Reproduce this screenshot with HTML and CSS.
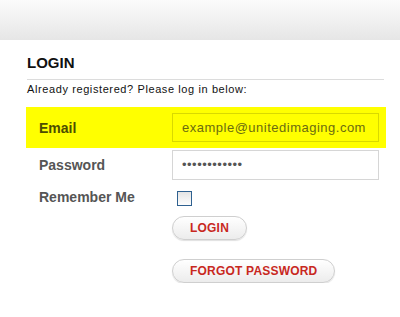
FILE: index.html
```html
<!DOCTYPE html>
<html lang="en">
	<head>
		<meta charset="UTF-8" />
		<title>Login</title>
		<link rel="stylesheet" href="styles.css">
	</head>
	<body>
		<div class="header"></div>
		<div class="content">
			<h2 class="title">LOGIN</h2>
			<p class="intro">Already registered? Please log in below:</p>
			<form class="login-form">
				<div class="row highlight">
					<label for="email">Email</label>
					<input type="text" id="email" value="example@unitedimaging.com" />
				</div>
				<div class="row">
					<label for="password">Password</label>
					<input type="password" id="password" value="examplepassw" />
				</div>
				<div class="row check-row">
					<label for="remember">Remember Me</label>
					<span class="checkbox"></span>
				</div>
				<div class="buttons">
					<button type="button" class="btn">LOGIN</button>
					<button type="button" class="btn">FORGOT PASSWORD</button>
				</div>
			</form>
		</div>
	</body>
</html>
```

FILE: styles.css
```css
body {
	margin: 0;
	font-family: "Liberation Sans", Arial, sans-serif;
	background: #fff;
	color: #000;
}

.header {
	height: 40px;
	background: linear-gradient(#fbfbfb, #e6e6e6);
}

.content {
	padding: 0 16px 0 27px;
}

.title {
	margin: 14px 0 0 0;
	font-size: 15px;
	line-height: 17px;
	font-weight: bold;
	color: #111;
	padding-bottom: 8px;
	border-bottom: 1px solid #dcdcdc;
}

.intro {
	margin: 2px 0 0 0;
	font-size: 11px;
	line-height: 14px;
	color: #111;
	letter-spacing: 0.6px;
}

.login-form {
	margin-top: 11px;
	margin-left: -1px;
}

.row {
	display: flex;
	align-items: center;
	height: 33px;
	padding-left: 13px;
}

.row label {
	width: 133px;
	font-size: 14px;
	font-weight: bold;
	color: #555;
}

.row input {
	box-sizing: border-box;
	width: 207px;
	height: 30px;
	padding: 0 9px;
	border: 1px solid #d6d6d6;
	background: #fff;
	font-family: "Liberation Sans", Arial, sans-serif;
	font-size: 13px;
	letter-spacing: 0.5px;
	color: #555;
	outline: none;
}

.highlight {
	height: 41px;
	width: 347px;
	background: #ffff00;
}

.highlight label {
	color: #4d4d00;
}

.highlight input {
	height: 29px;
	background: transparent;
	border-color: #d9d900;
	color: #6b6b10;
}

.check-row {
	height: 32px;
}

.checkbox {
	box-sizing: border-box;
	width: 15px;
	height: 15px;
	margin: 3px 0 0 5px;
	border: 1px solid #2f6190;
	background: linear-gradient(#e4e4e4, #fdfdfd);
}

.buttons {
	display: flex;
	flex-direction: column;
	align-items: flex-start;
	gap: 19px;
	padding: 3px 0 0 146px;
}

.btn {
	box-sizing: border-box;
	height: 24px;
	padding: 0 17px;
	border: 1px solid #cfcfcf;
	border-radius: 12px;
	background: linear-gradient(#ffffff, #ececec);
	font-family: "Liberation Sans", Arial, sans-serif;
	font-size: 12px;
	font-weight: bold;
	letter-spacing: 0.2px;
	color: #c8281e;
	box-shadow: 0 1px 1px #e0e0e0;
}
```
